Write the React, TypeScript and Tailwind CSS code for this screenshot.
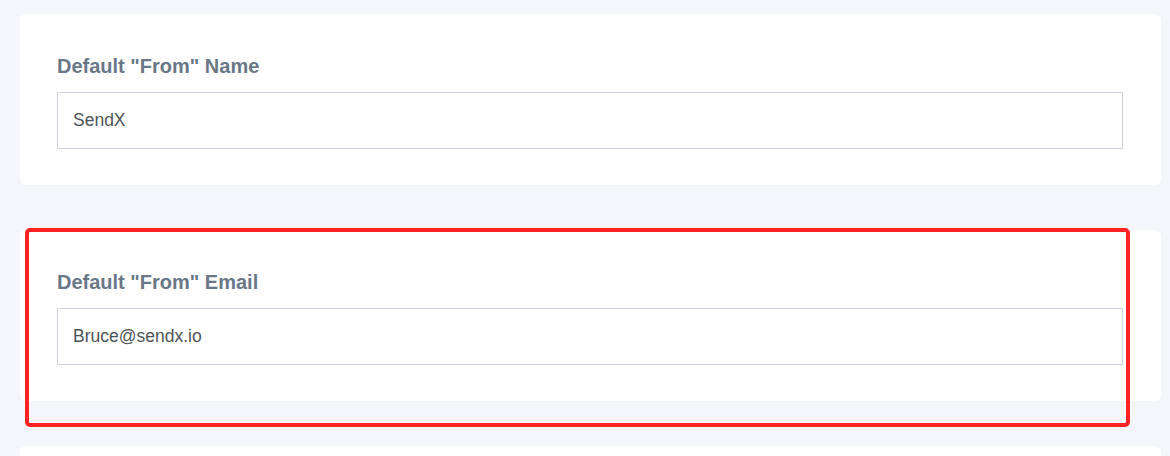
import React from "react";

const Field = ({ label, value }: { label: string; value: string }) => (
  <div className="bg-white rounded-[6px] pl-[37px] pr-[38px] pt-[40px] pb-[36px]">
    <label className="block text-[20px] leading-[24px] font-bold text-[#6a7787] mb-[14px]">
      {label}
    </label>
    <input
      readOnly
      value={value}
      className="w-full h-[57px] border border-[#cfd4dc] bg-white px-[15px] text-[17.5px] text-[#4f5458] outline-none"
    />
  </div>
);

export default function App() {
  return (
    <div
      className="relative h-[456px] overflow-hidden bg-[#f5f6fa] pt-[14px] pl-[20px] pr-[9px]"
      style={{ fontFamily: '"Liberation Sans", Arial, sans-serif' }}
    >
      <div className="flex flex-col gap-[45px]">
        <Field label={'Default "From" Name'} value="SendX" />
        <Field label={'Default "From" Email'} value="Bruce@sendx.io" />
        <div className="bg-white rounded-[6px] h-[171px]" />
      </div>
      <div className="absolute left-[25px] top-[228px] w-[1105px] h-[199px] border-[4px] border-[#ff2323] rounded-[5px]" />
    </div>
  );
}
